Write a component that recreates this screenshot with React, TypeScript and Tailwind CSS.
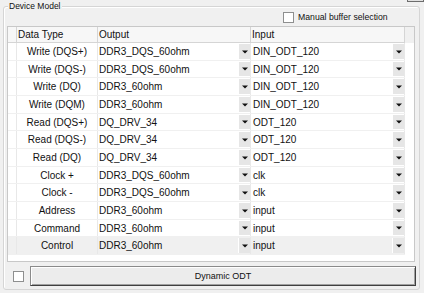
const rows: [string, string, string][] = [
  ["Write (DQS+)", "DDR3_DQS_60ohm", "DIN_ODT_120"],
  ["Write (DQS-)", "DDR3_DQS_60ohm", "DIN_ODT_120"],
  ["Write (DQ)", "DDR3_60ohm", "DIN_ODT_120"],
  ["Write (DQM)", "DDR3_60ohm", "DIN_ODT_120"],
  ["Read (DQS+)", "DQ_DRV_34", "ODT_120"],
  ["Read (DQS-)", "DQ_DRV_34", "ODT_120"],
  ["Read (DQ)", "DQ_DRV_34", "ODT_120"],
  ["Clock +", "DDR3_DQS_60ohm", "clk"],
  ["Clock -", "DDR3_DQS_60ohm", "clk"],
  ["Address", "DDR3_60ohm", "input"],
  ["Command", "DDR3_60ohm", "input"],
  ["Control", "DDR3_60ohm", "input"],
];

const tall = [true, false, true, true, false, true, true, false, true, true, false, true];

function DropButton() {
  return (
    <div className="w-[12px] my-[1px] shrink-0 bg-[#e6e6e6] border-l border-white flex items-center justify-center">
      <svg width="6" height="4" viewBox="0 0 6 4">
        <path d="M0 0.5H6L3 3.5Z" fill="#111" />
      </svg>
    </div>
  );
}

function CheckBox() {
  return <div className="w-[11px] h-[11px] shrink-0 border border-[#8e8f8f] bg-white" />;
}

export default function App() {
  return (
    <div
      className="w-[424px] h-[293px] bg-[#f0f0f0] relative overflow-hidden text-[#111] pt-[6px] pl-[3px]"
      style={{ fontFamily: '"Liberation Sans", Arial, sans-serif' }}
    >
      {/* edge of the control above, cut off */}
      <div className="absolute right-0 top-[-20px] w-[17px] h-[22px] border border-[#6d6d6d] bg-[#e1e1e1]" />

      <div className="relative w-[417px] h-[284px] border border-[#d5d5d5] rounded-[3px] shadow-[inset_1px_1px_0_#fff] px-[3px] pt-[5px]">
        <span className="absolute left-[4px] top-[-7px] px-[1px] bg-[#f0f0f0] text-[8.5px] leading-[12px]">
          Device Model
        </span>

        <div className="flex items-center h-[10px] pl-[276px] gap-[4px]">
          <CheckBox />
          <span className="text-[8.7px] leading-[10px]">Manual buffer selection</span>
        </div>

        <div className="mt-[4px] w-[408px] h-[236px] border border-[#c8c8c8] flex flex-col text-[10px]">
          <div className="flex h-[16px] shrink-0 leading-[15px]">
            <div className="w-[9px] bg-[#f7f7f7] border-r border-b border-[#d5d5d5]" />
            <div className="w-[81px] pl-[1px] bg-[#f7f7f7] border-r border-b border-[#d5d5d5]">Data Type</div>
            <div className="w-[153px] pl-[1px] bg-[#f7f7f7] border-r border-b border-[#d5d5d5]">Output</div>
            <div className="w-[154px] pl-[1px] bg-[#f7f7f7] border-r border-b border-[#d5d5d5]">Input</div>
          </div>

          <div className="flex-1 bg-white">
            {rows.map(([kind, out, inp], i) => {
              const last = i === rows.length - 1;
              return (
                <div
                  key={kind}
                  className={`flex w-[397px] border-b border-[#f0f0f0] ${tall[i] ? "h-[18px]" : "h-[17px]"} ${
                    last ? "bg-[#f0f0f0]" : "bg-white"
                  }`}
                >
                  <div className="w-[9px] border-r border-[#e8e8e8]" />
                  <div className="w-[81px] border-r border-[#e8e8e8] flex items-center justify-center">{kind}</div>
                  <div className="w-[153px] border-r border-[#e8e8e8] flex">
                    <span className="flex-1 pl-[1px] flex items-center">{out}</span>
                    <DropButton />
                  </div>
                  <div className="w-[154px] border-r border-[#e8e8e8] flex">
                    <span className="flex-1 pl-[2px] flex items-center">{inp}</span>
                    <DropButton />
                  </div>
                </div>
              );
            })}
          </div>
        </div>

        <div className="mt-[4px] h-[20px] flex items-center">
          <div className="ml-[6px]">
            <CheckBox />
          </div>
          <button className="ml-[6px] w-[387px] h-[20px] bg-[#ececec] border border-[#8a8a8a] border-r-[#404040] border-b-[#404040] shadow-[inset_1px_1px_0_#fff,inset_-1px_-1px_0_#a0a0a0] text-[9px] leading-[18px]">
            Dynamic ODT
          </button>
        </div>
      </div>
    </div>
  );
}
